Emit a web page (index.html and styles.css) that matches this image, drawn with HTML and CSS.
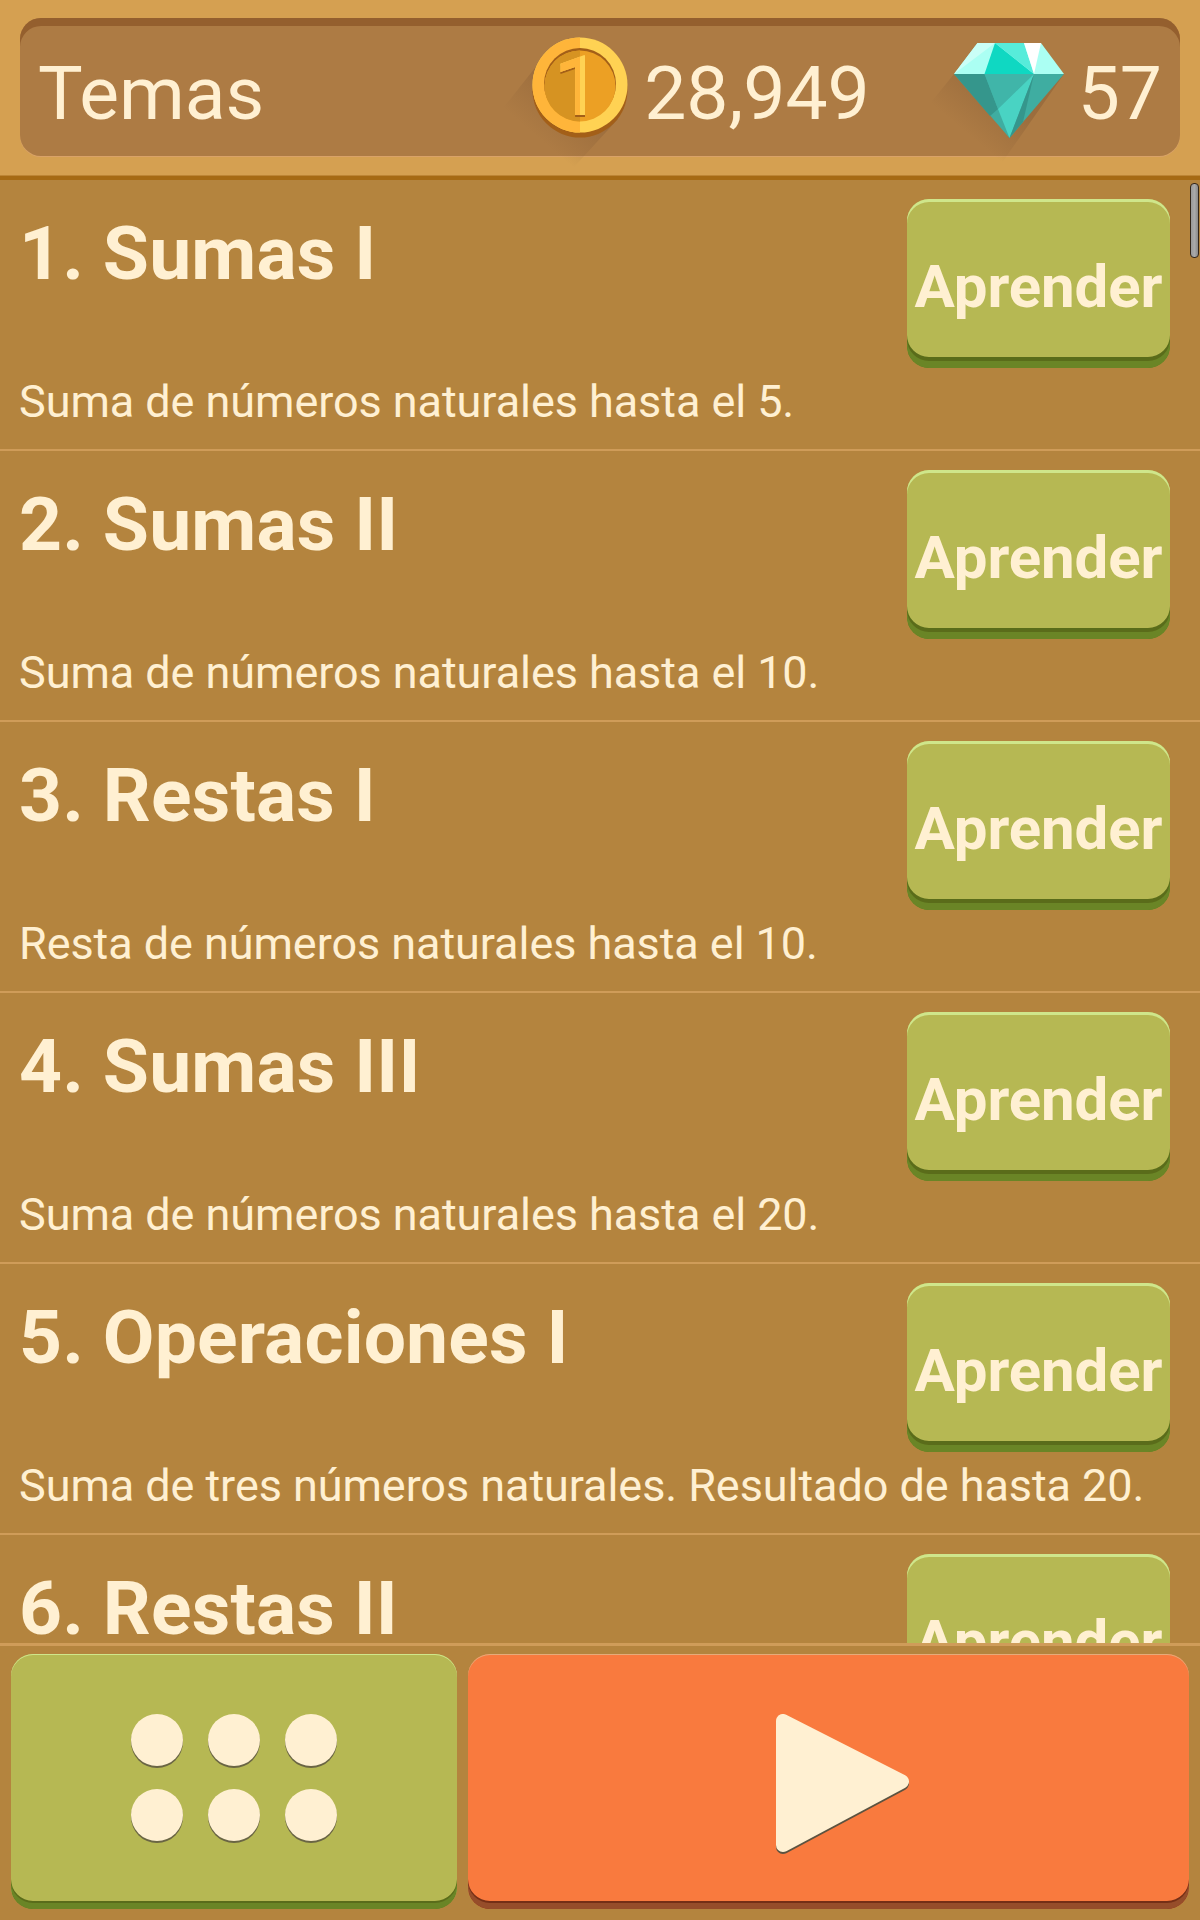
FILE: index.html
```html
<!DOCTYPE html>
<html lang="es">
<head>
    <meta charset="UTF-8">
    <meta name="viewport" content="width=device-width, initial-scale=1.0">
    <title>Temas</title>
    <link rel="stylesheet" href="styles.css">
</head>
<body>
    <header class="header">
        <div class="panel">
            <h1>Temas</h1>
            <div class="counter coins">
                <svg class="coin" width="96" height="102" viewBox="0 0 96 102">
                    <defs>
                        <linearGradient id="shade" gradientUnits="userSpaceOnUse" x1="60" y1="50" x2="12" y2="106">
                            <stop offset="0.2" stop-color="#7a5230" stop-opacity="0.35"/>
                            <stop offset="1" stop-color="#7a5230" stop-opacity="0"/>
                        </linearGradient>
                        <clipPath id="left-half"><rect x="0" y="0" width="48" height="102"/></clipPath>
                    </defs>
                    <path d="M6 27L-32 75L42 130L86 82Z" fill="url(#shade)"/>
                    <circle cx="48" cy="53" r="47.5" fill="#a35f18"/>
                    <circle cx="48" cy="48" r="47.5" fill="#ffd253"/>
                    <circle cx="48" cy="48" r="47.5" fill="#ffb53a" clip-path="url(#left-half)"/>
                    <circle cx="48" cy="47" r="36" fill="#a35f18"/>
                    <circle cx="48" cy="49" r="35.5" fill="#eca024"/>
                    <circle cx="48" cy="49" r="35.5" fill="#d69322" clip-path="url(#left-half)"/>
                    <text class="coin-digit coin-digit-shadow" x="21.5" y="80">1</text>
                    <text class="coin-digit" x="21.5" y="78">1</text>
                    <text class="coin-digit coin-digit-left" x="21.5" y="78" clip-path="url(#left-half)">1</text>
                </svg>
                <span>28,949</span>
            </div>
            <div class="counter gems">
                <svg class="gem" width="110" height="96" viewBox="0 0 110 96">
                    <defs>
                        <linearGradient id="gem-shade" gradientUnits="userSpaceOnUse" x1="60" y1="40" x2="16" y2="93">
                            <stop offset="0.2" stop-color="#7a5230" stop-opacity="0.35"/>
                            <stop offset="1" stop-color="#7a5230" stop-opacity="0"/>
                        </linearGradient>
                    </defs>
                    <path d="M0 31L-30 68L45 124L110 31Z" fill="url(#gem-shade)"/>
                    <path d="M23.500 0H87L110 31H0Z" fill="#abfff3"/>
                    <path d="M23.500 0H41L0 31Z" fill="#cafff7"/>
                    <path d="M41 0L80 31H30.500Z" fill="#0fd8c2"/>
                    <path d="M41 0H70L80 31Z" fill="#57ecda"/>
                    <path d="M70 0H87L80 31Z" fill="#fff"/>
                    <path d="M0 31H110L55.500 95Z" fill="#3fada1"/>
                    <path d="M0 31H30.500L44 66L36 73Z" fill="#35968c"/>
                    <path d="M30.500 31H80L44 66Z" fill="#40b5a9"/>
                    <path d="M80 31L44 66L55.500 95Z" fill="#49d3c3"/>
                    <path d="M80 31L69 79L55.500 95Z" fill="#35968c"/>
                </svg>
                <span>57</span>
            </div>
        </div>
    </header>

    <main class="topics">
        <section class="topic">
            <h2>1. Sumas I</h2>
            <button class="learn">Aprender</button>
            <p>Suma de números naturales hasta el 5.</p>
        </section>
        <section class="topic">
            <h2>2. Sumas II</h2>
            <button class="learn">Aprender</button>
            <p>Suma de números naturales hasta el 10.</p>
        </section>
        <section class="topic">
            <h2>3. Restas I</h2>
            <button class="learn">Aprender</button>
            <p>Resta de números naturales hasta el 10.</p>
        </section>
        <section class="topic">
            <h2>4. Sumas III</h2>
            <button class="learn">Aprender</button>
            <p>Suma de números naturales hasta el 20.</p>
        </section>
        <section class="topic">
            <h2>5. Operaciones I</h2>
            <button class="learn">Aprender</button>
            <p>Suma de tres números naturales. Resultado de hasta 20.</p>
        </section>
        <section class="topic">
            <h2>6. Restas II</h2>
            <button class="learn">Aprender</button>
        </section>
        <div class="scrollbar"></div>
    </main>

    <footer class="actions">
        <button class="menu" aria-label="Menú">
            <span class="dot"></span><span class="dot"></span><span class="dot"></span>
            <span class="dot"></span><span class="dot"></span><span class="dot"></span>
        </button>
        <button class="play" aria-label="Jugar">
            <svg width="134" height="141" viewBox="0 0 134 141">
                <path d="M7 9V131L126 67.500Z" transform="translate(0 2)" fill="#5c5340" stroke="#5c5340" stroke-width="14" stroke-linejoin="round"/>
                <path d="M7 7V131L126 67.500Z" fill="#fff0d2" stroke="#fff0d2" stroke-width="14" stroke-linejoin="round"/>
            </svg>
        </button>
    </footer>
</body>
</html>
```
FILE: styles.css
```css
* {
    box-sizing: border-box;
}
body {
    margin: 0;
    width: 1200px;
    height: 1920px;
    overflow: hidden;
    display: flex;
    flex-direction: column;
    font-family: Roboto, sans-serif;
    color: #fff0d2;
    background: #b4843e;
}
h1, h2, p {
    margin: 0;
}
button {
    border: none;
    padding: 0;
    font-family: inherit;
    color: inherit;
}

/* top bar */
.header {
    height: 180px;
    flex: none;
    padding: 18px 20px 0;
    background: #d5a051;
    border-bottom: 4px solid #a66a14;
    box-shadow: inset 0 -1px 0 #bd8535;
}
.panel {
    height: 138px;
    padding: 0 18px;
    border-radius: 21px;
    background: #ad7b44;
    box-shadow: inset 0 8px 0 #945f2e, 0 1px 0 #d9a268;
    display: flex;
    align-items: center;
    font-size: 75px;
    line-height: 88px;
}
.panel h1 {
    font-size: 75px;
    font-weight: 400;
    padding-top: 12px;
}
.counter {
    display: flex;
    align-items: center;
}
.counter span {
    padding-top: 12px;
}
.counter svg {
    overflow: visible;
}
.coin {
    margin-top: 2px;
}
.gem {
    margin-top: 8px;
}
.coins {
    margin-left: auto;
    gap: 16px;
}
.gems {
    margin-left: 84px;
    gap: 14px;
}
.coin-digit {
    font-size: 84px;
    font-weight: 500;
    fill: #ffd253;
}
.coin-digit-left {
    fill: #ffb53a;
}
.coin-digit-shadow {
    fill: #a35f18;
}

/* list */
.topics {
    flex: 1;
    min-height: 0;
    overflow: hidden;
    position: relative;
}
.topic {
    height: 271px;
    padding: 19px 30px 0 19px;
    display: grid;
    grid-template-columns: 1fr 263px;
    grid-template-rows: 169px 1fr;
    border-bottom: 2px solid #cf9c59;
}
.topic h2 {
    font-size: 75px;
    line-height: 88px;
    letter-spacing: 0.15px;
    padding-top: 10px;
}
.topic p {
    grid-column: 1 / 3;
    font-size: 45px;
    line-height: 53px;
    letter-spacing: -0.07px;
    padding-top: 7px;
    white-space: nowrap;
}
.learn {
    height: 169px;
    border-radius: 22px;
    font-size: 60px;
    font-weight: 700;
    line-height: 70px;
    letter-spacing: -0.1px;
    padding-top: 6px;
    background: #b6b853;
    box-shadow: inset 0 3px 0 #cfe68b, inset 0 -7px 0 #6a8526, inset 0 -11px 0 #5a6c1a;
}
.scrollbar {
    position: absolute;
    top: 3px;
    right: 1px;
    width: 9px;
    height: 75px;
    border: 1px solid #33261a;
    border-radius: 4px;
    background: linear-gradient(to right, #999, #aaa, #8a8a8a);
}

/* bottom buttons */
.actions {
    flex: none;
    height: 277px;
    padding: 8px 11px 11px;
    border-top: 3px solid #cf9c59;
    display: flex;
    gap: 11px;
}
.menu, .play {
    height: 255px;
    border-radius: 22px;
}
.menu {
    width: 446px;
    padding-bottom: 8px;
    display: grid;
    grid-template-columns: repeat(3, 52px);
    gap: 23px 25px;
    place-content: center;
    background: #b6b853;
    box-shadow: inset 0 1px 0 #cfe68b, inset 0 -6px 0 #6a8526, inset 0 -8px 0 #5a6c1a;
}
.dot {
    height: 52px;
    border-radius: 50%;
    background: #fff0d2;
    box-shadow: 0 2px 0 #6a6544;
}
.play {
    flex: 1;
    padding: 9px 0 0 28px;
    background: #f97a3e;
    box-shadow: inset 0 1px 0 #e5ab7a, inset 0 -6px 0 #964d2a, inset 0 -8px 0 #752f16;
}
```
